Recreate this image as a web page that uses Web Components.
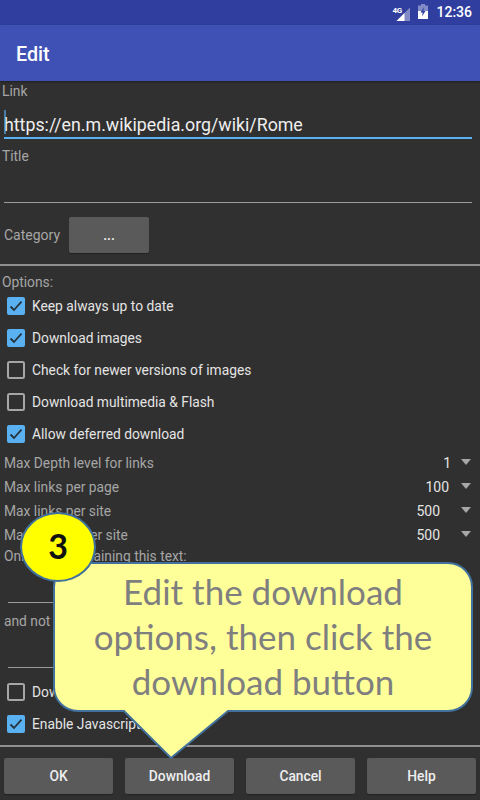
<!DOCTYPE html>
<html>
<head>
<meta charset="utf-8">
<title>Edit</title>
<style>
    html, body {
        margin: 0;
        padding: 0;
    }
    body {
        width: 480px;
        height: 800px;
        overflow: hidden;
        position: relative;
        background: #303030;
        font-family: Roboto, "Liberation Sans", sans-serif;
    }
</style>
</head>
<body>
<status-bar></status-bar>
<app-bar>Edit</app-bar>
<edit-form>
    <text-field label="Link" value="https://en.m.wikipedia.org/wiki/Rome" focused></text-field>
    <text-field label="Title"></text-field>
    <category-row></category-row>
    <h-rule></h-rule>
    <plain-label>Options:</plain-label>
    <check-row checked>Keep always up to date</check-row>
    <check-row checked>Download images</check-row>
    <check-row>Check for newer versions of images</check-row>
    <check-row>Download multimedia &amp; Flash</check-row>
    <check-row checked>Allow deferred download</check-row>
    <spin-list>
        <spin-row label="Max Depth level for links" value="1" gap="10"></spin-row>
        <spin-row label="Max links per page" value="100" gap="12"></spin-row>
        <spin-row label="Max links per site" value="500" gap="21"></spin-row>
        <spin-row label="Max images per site" value="500" gap="21"></spin-row>
    </spin-list>
    <filter-field label="Only links containing this text:"></filter-field>
    <filter-field label="and not containing this text:"></filter-field>
    <check-row>Download in background</check-row>
    <check-row checked>Enable Javascript</check-row>
    <h-rule></h-rule>
</edit-form>
<action-bar>
    <action-button>OK</action-button>
    <action-button>Download</action-button>
    <action-button>Cancel</action-button>
    <action-button>Help</action-button>
</action-bar>
<tip-bubble>Edit the download options, then click the download button</tip-bubble>
<step-badge>3</step-badge>

<script>
    function define(name, css, html) {
        customElements.define(name, class extends HTMLElement {
            constructor() {
                super();
                this.attachShadow({ mode: 'open' });
            }
            connectedCallback() {
                this.shadowRoot.innerHTML = `<style>${css}</style>${typeof html === 'function' ? html(this) : html}`;
            }
        });
    }

    define('status-bar', `
        :host {
            display: flex;
            align-items: center;
            justify-content: flex-end;
            height: 25px;
            background: #303f9f;
            padding-right: 8px;
            box-sizing: border-box;
            color: #fff;
        }
        .net { position: relative; width: 18px; height: 16px; margin-right: 8px; }
        .net svg { position: absolute; left: 4px; top: 2px; }
        .net span {
            position: absolute;
            left: 0;
            top: 1px;
            font: bold 8px/9px Roboto, sans-serif;
            letter-spacing: -0.3px;
        }
        .bat { display: block; margin-right: 8px; margin-top: -2px; }
        .time { font: 500 14px/25px Roboto, sans-serif; }
    `, `
        <div class="net">
            <svg width="14" height="14" viewBox="0 0 14 14"><path d="M14 .500V14H.500z" fill="#fff" opacity=".4"/><path d="M8.500 6V14H.500z" fill="#fff"/></svg>
            <span>4G</span>
        </div>
        <svg class="bat" width="10" height="15" viewBox="0 0 10 15">
            <path d="M3 0H7V1.500H10V15H0V1.500H3z" fill="#fff" opacity=".4"/>
            <path d="M0 7H10V15H0z" fill="#fff"/>
            <path d="M6 3 2.500 8.500H4.700L4 12.500 7.500 7H5.300z" fill="#303f9f"/>
        </svg>
        <span class="time">12:36</span>
    `);

    define('app-bar', `
        :host {
            display: flex;
            align-items: center;
            box-sizing: border-box;
            height: 56px;
            padding: 2px 0 0 16px;
            background: #3f51b5;
            color: #fff;
            font: 500 19.700px Roboto, sans-serif;
            box-shadow: 0 1px 2px rgba(0, 0, 0, .35);
            position: relative;
        }
    `, `<slot></slot>`);

    define('edit-form', `
        :host {
            display: flex;
            flex-direction: column;
            height: 666px;
        }
    `, `<slot></slot>`);

    define('text-field', `
        :host { display: block; height: 65px; }
        .label {
            height: 20px;
            padding-left: 2px;
            font-size: 13.800px;
            line-height: 20px;
            color: #a6a6a6;
        }
        .input {
            position: relative;
            height: 37px;
            margin: 0 8px 0 4px;
            box-sizing: border-box;
            border-bottom: 1px solid #9a9a9a;
            color: #eee;
            font-size: 17.800px;
            line-height: 47px;
            white-space: nowrap;
        }
        :host([focused]) .input { border-bottom: 2px solid #5ab1f1; height: 38px; }
        .caret {
            position: absolute;
            left: 0;
            top: 9px;
            width: 2px;
            height: 24px;
            background: #5ab1f1;
            opacity: .6;
        }
    `, (el) => `
        <div class="label">${el.getAttribute('label')}</div>
        <div class="input">${el.hasAttribute('focused') ? '<span class="caret"></span>' : ''}${el.getAttribute('value') || ''}</div>
    `);

    define('category-row', `
        :host {
            display: flex;
            align-items: center;
            gap: 9px;
            height: 48px;
            padding-left: 4px;
            font-size: 14px;
            color: #a6a6a6;
        }
        button {
            width: 80px;
            height: 36px;
            border: 0;
            border-radius: 2px;
            background: #5a5a5a;
            color: #eee;
            font: 500 14px Roboto, sans-serif;
            padding: 0;
            box-shadow: 0 1px 1px rgba(0, 0, 0, .3);
        }
    `, `<span>Category</span><button>...</button>`);

    define('h-rule', `
        :host {
            display: block;
            flex: none;
            height: 2px;
            margin-top: 5px;
            background: #8f8f8f;
        }
    `, ``);

    define('plain-label', `
        :host {
            display: block;
            box-sizing: border-box;
            height: 24px;
            padding: 6px 0 0 2px;
            font-size: 13.800px;
            line-height: 20px;
            color: #a6a6a6;
        }
    `, `<slot></slot>`);

    define('check-row', `
        :host {
            display: flex;
            flex: none;
            align-items: center;
            height: 32px;
            padding-left: 7px;
            gap: 7px;
            font-size: 13.800px;
            color: #e4e4e4;
            white-space: nowrap;
        }
        svg { display: block; flex: none; }
    `, (el) => `
        ${el.hasAttribute('checked')
            ? `<svg width="18" height="18" viewBox="0 0 18 18"><rect width="18" height="18" rx="2" fill="#5ab1f1"/><path d="M3.500 9.500 7 13 14.500 4.700" fill="none" stroke="#26323c" stroke-width="1.800"/></svg>`
            : `<svg width="18" height="18" viewBox="0 0 18 18"><rect x="1" y="1" width="16" height="16" rx="1.500" fill="none" stroke="#a6a6a6" stroke-width="2"/></svg>`}
        <slot></slot>
    `);

    define('spin-list', `
        :host {
            display: block;
            flex: none;
            padding-top: 1px;
            margin-bottom: -1px;
        }
    `, `<slot></slot>`);

    define('spin-row', `
        :host {
            display: flex;
            align-items: center;
            height: 24px;
            padding: 0 9px 0 4px;
            font-size: 13.800px;
            color: #a6a6a6;
        }
        .label { flex: 1; }
        .value { color: #e4e4e4; font-size: 14px; }
        svg { display: block; margin-bottom: 3px; }
    `, (el) => `
        <span class="label">${el.getAttribute('label')}</span>
        <span class="value" style="margin-right:${el.getAttribute('gap')}px">${el.getAttribute('value')}</span>
        <svg width="10" height="6" viewBox="0 0 10 6"><path d="M0 0H10L5 6z" fill="#a6a6a6"/></svg>
    `);

    define('filter-field', `
        :host { display: block; flex: none; height: 65px; }
        .label {
            height: 20px;
            padding-left: 4px;
            font-size: 13.800px;
            line-height: 20px;
            color: #a6a6a6;
        }
        .input {
            height: 36px;
            margin: 0 8px;
            border-bottom: 1px solid #9a9a9a;
        }
    `, (el) => `<div class="label">${el.getAttribute('label')}</div><div class="input"></div>`);

    define('action-bar', `
        :host {
            display: grid;
            grid-template-columns: repeat(4, 109px);
            justify-content: space-between;
            padding: 0 4px;
            height: 36px;
            margin-top: 11px;
        }
    `, `<slot></slot>`);

    define('action-button', `
        :host {
            display: flex;
            align-items: center;
            justify-content: center;
            border-radius: 2px;
            background: #5a5a5a;
            color: #eee;
            font: 500 13.800px Roboto, sans-serif;
            box-shadow: 0 1px 1px rgba(0, 0, 0, .3);
        }
    `, `<slot></slot>`);

    define('tip-bubble', `
        :host {
            position: absolute;
            left: 53px;
            top: 562px;
            width: 420px;
            height: 198px;
        }
        svg { position: absolute; left: 0; top: 0; display: block; }
        .text {
            position: absolute;
            left: 0;
            top: 7px;
            width: 420px;
            box-sizing: border-box;
            padding: 0 25px;
            text-align: center;
            font: 35px/45px Lato, "Open Sans", sans-serif;
            color: #7f7f7f;
        }
    `, `
        <svg width="420" height="198" viewBox="0 0 420 198">
            <path d="M25 1H395A24 24 0 0 1 419 25V125A24 24 0 0 1 395 149H175L118 196 71 149H25A24 24 0 0 1 1 125V25A24 24 0 0 1 25 1z" fill="#ffff99" stroke="#41719c" stroke-width="2"/>
        </svg>
        <div class="text"><slot></slot></div>
    `);

    define('step-badge', `
        :host {
            position: absolute;
            left: 20px;
            top: 512px;
            width: 76px;
            height: 70px;
            box-sizing: border-box;
            padding-bottom: 3px;
            border: 2px solid #41719c;
            border-radius: 50%;
            background: #ffff00;
            display: flex;
            align-items: center;
            justify-content: center;
            color: #111;
            font: bold 34px Lato, sans-serif;
        }
    `, `<slot></slot>`);
</script>
</body>
</html>
